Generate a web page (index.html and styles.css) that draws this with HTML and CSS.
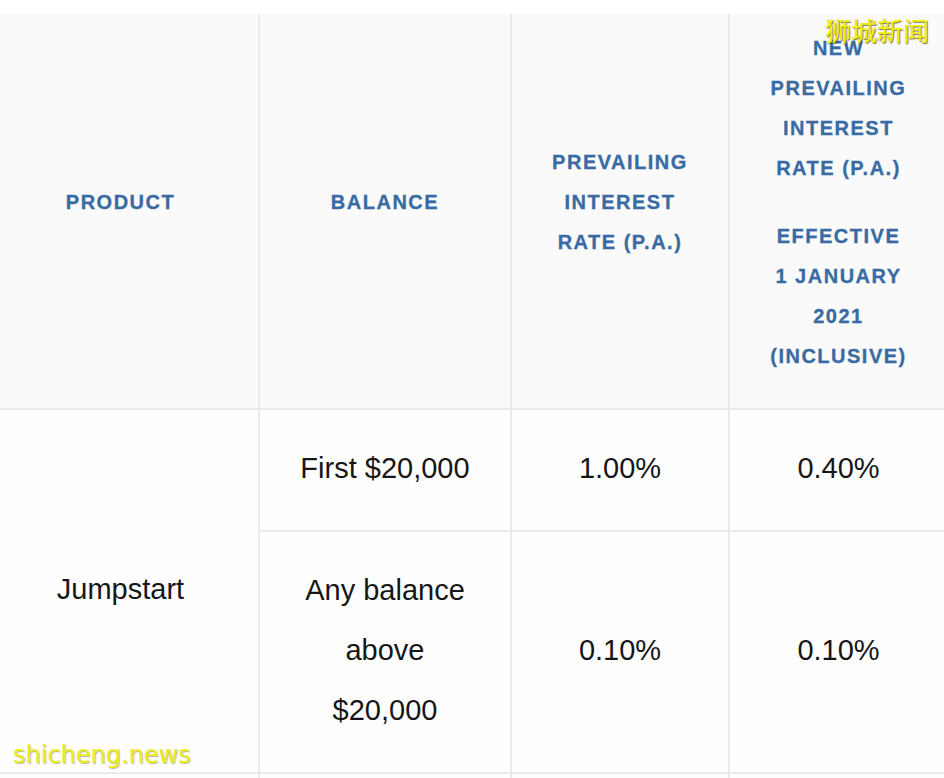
FILE: index.html
```html
<!DOCTYPE html>
<html lang="en">
<head>
<meta charset="utf-8">
<title>Interest rates</title>
<link rel="stylesheet" href="styles.css">
</head>
<body>
<div class="page">
  <div class="rates">
    <div class="cell head">PRODUCT</div>
    <div class="cell head">BALANCE</div>
    <div class="cell head">PREVAILING<br>INTEREST<br>RATE (P.A.)</div>
    <div class="cell head stack">
      <p>NEW<br>PREVAILING<br>INTEREST<br>RATE (P.A.)</p>
      <p>EFFECTIVE<br>1 JANUARY<br>2021<br>(INCLUSIVE)</p>
    </div>

    <div class="cell body product">Jumpstart</div>
    <div class="cell body">First $20,000</div>
    <div class="cell body">1.00%</div>
    <div class="cell body">0.40%</div>

    <div class="cell body">Any balance<br>above<br>$20,000</div>
    <div class="cell body">0.10%</div>
    <div class="cell body">0.10%</div>

    <div class="cell body filler"></div>
    <div class="cell body filler"></div>
    <div class="cell body filler"></div>
    <div class="cell body filler"></div>
  </div>
  <div class="mark mark-cn">狮城新闻</div>
  <div class="mark mark-en">shicheng.news</div>
</div>
</body>
</html>
```
FILE: styles.css
```css
html, body {
  margin: 0;
  padding: 0;
  overflow: hidden;
  background: #ffffff;
}

.page {
  position: relative;
  width: 944px;
  height: 778px;
  overflow: hidden;
  padding-top: 14px;
  box-sizing: border-box;
}

.rates {
  display: grid;
  grid-template-columns: 275px 250px 216px 217px;
  gap: 2px;
  width: 964px;
  margin-left: -17px;
  background: #ebe9eb;
}

.cell {
  display: flex;
  flex-direction: column;
  align-items: center;
  justify-content: center;
  text-align: center;
}

.head {
  background: #fafafa;
  padding: 14px 10px 32px;
  font-family: "Liberation Sans", Arial, sans-serif;
  font-weight: 700;
  font-size: 20px;
  line-height: 40px;
  letter-spacing: 1.5px;
  color: #386aa3;
  -webkit-text-stroke: 0.3px #386aa3;
}

.stack {
  gap: 28px;
}

.stack p {
  margin: 0;
}

.body {
  background: #fefefe;
  padding: 28px 10px 32px;
  font-family: "Liberation Sans", Arial, sans-serif;
  font-size: 29px;
  line-height: 60px;
  color: #161616;
}

.product {
  grid-row: span 2;
}

.filler {
  height: 60px;
}

.mark {
  position: absolute;
  color: #f2f000;
  white-space: nowrap;
}

.mark-cn {
  top: 12px;
  left: 825px;
  font-family: "Noto Sans CJK SC", sans-serif;
  font-size: 26px;
  line-height: 36px;
  text-shadow: 1px 1px 1px rgba(70, 70, 40, 0.75);
}

.mark-en {
  top: 738px;
  left: 13px;
  font-family: "DejaVu Sans", sans-serif;
  font-size: 24px;
  line-height: 34px;
  color: #ecec1a;
  text-shadow: 1px 1px 1px rgba(120, 120, 60, 0.5);
}
```
